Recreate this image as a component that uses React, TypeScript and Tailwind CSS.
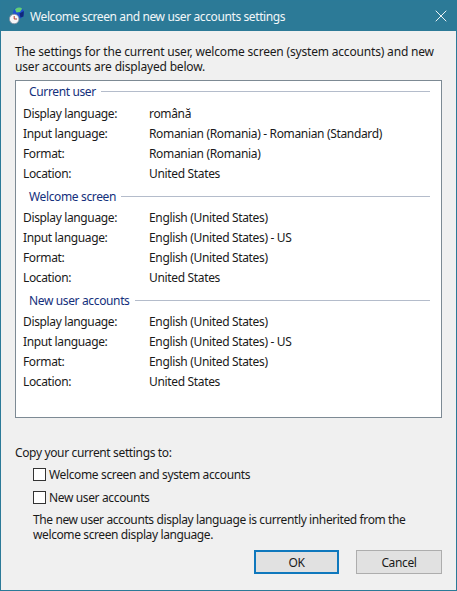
import React from 'react';
import { X } from 'lucide-react';

type Section = {
  title: string;
  rows: [string, string][];
};

const sections: Section[] = [
  {
    title: 'Current user',
    rows: [
      ['Display language:', 'română'],
      ['Input language:', 'Romanian (Romania) - Romanian (Standard)'],
      ['Format:', 'Romanian (Romania)'],
      ['Location:', 'United States'],
    ],
  },
  {
    title: 'Welcome screen',
    rows: [
      ['Display language:', 'English (United States)'],
      ['Input language:', 'English (United States) - US'],
      ['Format:', 'English (United States)'],
      ['Location:', 'United States'],
    ],
  },
  {
    title: 'New user accounts',
    rows: [
      ['Display language:', 'English (United States)'],
      ['Input language:', 'English (United States) - US'],
      ['Format:', 'English (United States)'],
      ['Location:', 'United States'],
    ],
  },
];

const AppIcon: React.FC = () => (
  <svg width="16" height="18" viewBox="0 0 16 18" className="shrink-0">
    <circle cx="9.5" cy="6" r="5.5" fill="#1e4fd0" />
    <path d="M6 2.5 C8 0 11.5 0 13.2 1.8 L11 5 L7.5 5.5 Z" fill="#63cf74" />
    <path d="M10.5 6.5 L14.8 4 L14.5 9.5 L11.5 10.5 Z" fill="#10287a" />
    <circle cx="5.2" cy="12" r="4.8" fill="#f6f6f8" stroke="#7f8c9c" strokeWidth="0.8" />
    <path d="M5.2 9 V12 H8" fill="none" stroke="#b23a2e" strokeWidth="1" />
  </svg>
);

const CheckRow: React.FC<{ label: string }> = ({ label }) => (
  <label className="flex h-[23px] items-center pl-[18px]">
    <span className="h-[13px] w-[13px] shrink-0 border border-[#333333] bg-white" />
    <span className="ml-[3px]">{label}</span>
  </label>
);

export default function App() {
  return (
    <div
      className="flex h-[591px] w-[457px] flex-col overflow-hidden border border-[#2b7a98] bg-[#f0f0f0] text-[12px] leading-[15px] tracking-[-0.36px] text-[#1a1a1a]"
      style={{ fontFamily: '"Noto Sans", sans-serif' }}
    >
      <div className="flex h-[30px] shrink-0 items-center bg-[#2c7a97] pl-[8px] pr-[5px] text-[#f2f7f9]">
        <AppIcon />
        <span className="ml-[5px] tracking-[-0.39px]">Welcome screen and new user accounts settings</span>
        <X size={20} strokeWidth={1.1} className="ml-auto text-white" />
      </div>

      <div className="flex flex-1 flex-col px-[14px]">
        <p className="mt-[13px] h-[30px] tracking-[-0.18px]">
          The settings for the current user, welcome screen (system accounts) and new
          <br />
          user accounts are displayed below.
        </p>

        <div className="mt-[6px] flex h-[338px] flex-col border border-[#7d8a94] bg-white pl-[7px] pr-[11px] pt-[3px]">
          {sections.map((section, i) => (
            <div key={section.title} className={i === 0 ? '' : 'mt-[6px]'}>
              <div className="flex h-[15px] items-center pl-[6px]">
                <span className="text-[#14307c]">{section.title}</span>
                <span className="ml-[5px] h-px flex-1 bg-[#b4bccb]" />
              </div>
              <div className={i === 0 ? 'mt-[4px]' : 'mt-[3px]'}>
                {section.rows.map(([label, value]) => (
                  <div key={label} className="flex h-[20px] items-center">
                    <span className="w-[126px] shrink-0">{label}</span>
                    <span className="tracking-[-0.34px]">{value}</span>
                  </div>
                ))}
              </div>
            </div>
          ))}
        </div>

        <p className="mt-[27px]">Copy your current settings to:</p>
        <div className="mt-[3px]">
          <CheckRow label="Welcome screen and system accounts" />
          <CheckRow label="New user accounts" />
        </div>
        <p className="mt-[3px] pl-[18px] tracking-[-0.39px]">
          The new user accounts display language is currently inherited from the
          <br />
          welcome screen display language.
        </p>

        <div className="mt-[8px] flex justify-end gap-[17px]">
          <button className="h-[24px] w-[85px] border-2 border-[#0f78bd] bg-[#e1e1e1]">OK</button>
          <button className="h-[24px] w-[86px] border border-[#adadad] bg-[#e1e1e1]">Cancel</button>
        </div>
      </div>
    </div>
  );
}
